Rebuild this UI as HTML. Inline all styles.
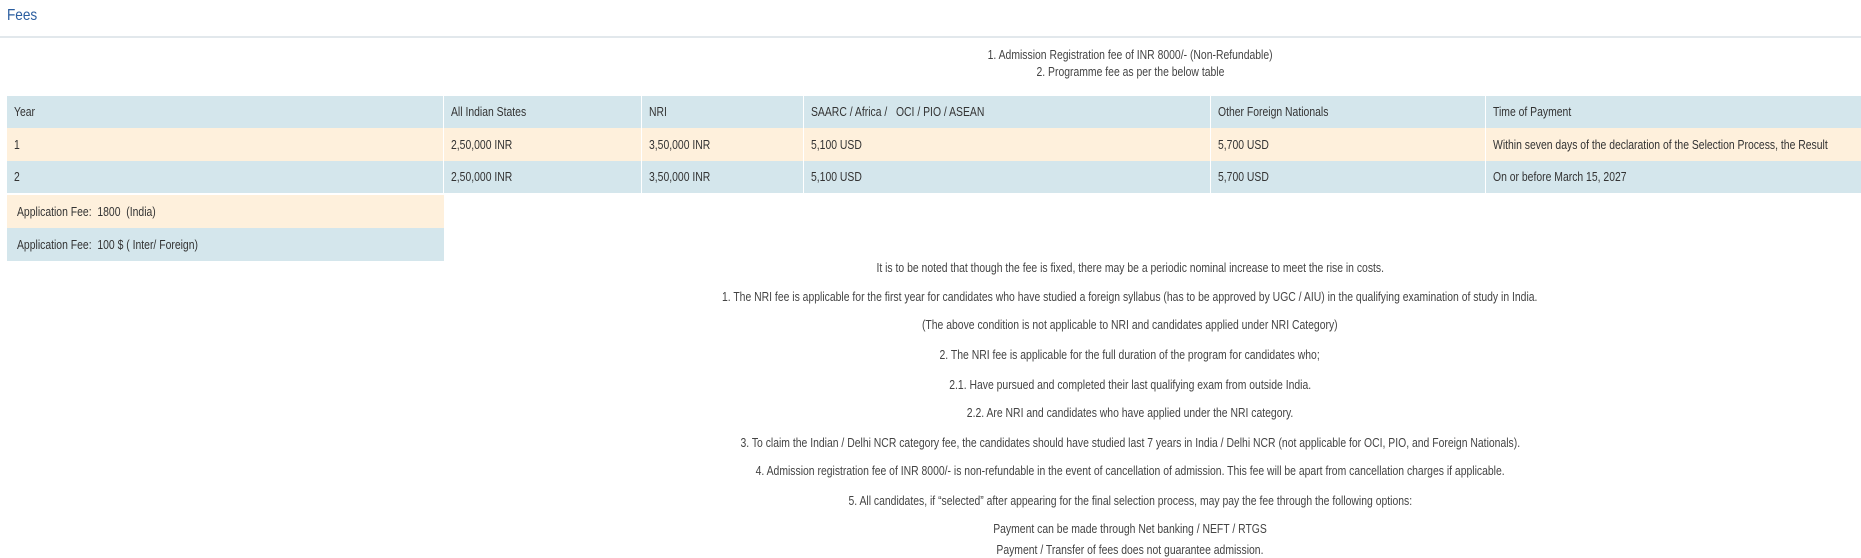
<!DOCTYPE html>
<html><head><meta charset="utf-8"><style>
body{margin:0;width:1861px;height:554px;background:#fff;font-family:"Liberation Sans",sans-serif;color:#333;position:relative;overflow:hidden}
.s{display:inline-block;transform:scaleX(0.8);white-space:nowrap}
.l{transform-origin:left center}
.a{position:absolute;font-size:13px;line-height:16px}
.c{position:absolute;left:0;width:2260px;text-align:center;font-size:13px;line-height:16px;color:#444}
.r{position:absolute;left:7px;width:1854px}
.cell{position:absolute;top:0;height:100%;border-right:1px solid #fff;box-sizing:border-box}
.cell span{position:absolute;left:7px;top:50%;margin-top:-8px;font-size:13px;line-height:16px;color:#333}
</style></head><body>
<div class="a" style="left:7px;top:7px;font-size:16px;line-height:18px;color:#2a5d9f"><span class="s l" style="transform:scaleX(0.85)">Fees</span></div>
<div style="position:absolute;left:0;top:36px;width:1861px;height:2px;background:#e2e8ec"></div>
<div class="c" style="top:47px"><span class="s">1. Admission Registration fee of INR 8000/- (Non-Refundable)</span></div>
<div class="c" style="top:64px"><span class="s">2. Programme fee as per the below table</span></div>

<div class="r" style="top:96px;height:32px;background:#d4e6ec">
<div class="cell" style="left:0;width:437px"><span class="s l">Year</span></div>
<div class="cell" style="left:437px;width:198px"><span class="s l">All Indian States</span></div>
<div class="cell" style="left:635px;width:162px"><span class="s l">NRI</span></div>
<div class="cell" style="left:797px;width:407px"><span class="s l">SAARC / Africa / &nbsp; OCI / PIO / ASEAN</span></div>
<div class="cell" style="left:1204px;width:275px"><span class="s l">Other Foreign Nationals</span></div>
<div class="cell" style="left:1479px;width:375px;border:0"><span class="s l">Time of Payment</span></div>
</div>
<div class="r" style="top:128px;height:33px;background:#fef0dc">
<div class="cell" style="left:0;width:437px"><span class="s l">1</span></div>
<div class="cell" style="left:437px;width:198px"><span class="s l">2,50,000 INR</span></div>
<div class="cell" style="left:635px;width:162px"><span class="s l">3,50,000 INR</span></div>
<div class="cell" style="left:797px;width:407px"><span class="s l">5,100 USD</span></div>
<div class="cell" style="left:1204px;width:275px"><span class="s l">5,700 USD</span></div>
<div class="cell" style="left:1479px;width:375px;border:0"><span class="s l">Within seven days of the declaration of the Selection Process, the Result</span></div>
</div>
<div class="r" style="top:161px;height:32px;background:#d4e6ec">
<div class="cell" style="left:0;width:437px"><span class="s l">2</span></div>
<div class="cell" style="left:437px;width:198px"><span class="s l">2,50,000 INR</span></div>
<div class="cell" style="left:635px;width:162px"><span class="s l">3,50,000 INR</span></div>
<div class="cell" style="left:797px;width:407px"><span class="s l">5,100 USD</span></div>
<div class="cell" style="left:1204px;width:275px"><span class="s l">5,700 USD</span></div>
<div class="cell" style="left:1479px;width:375px;border:0"><span class="s l">On or before March 15, 2027</span></div>
</div>
<div class="r" style="top:195px;height:33px;width:437px;background:#fef0dc"><div class="cell" style="left:3px;width:430px;border:0"><span class="s l">Application Fee:&nbsp; 1800 &nbsp;(India)</span></div></div>
<div class="r" style="top:228px;height:33px;width:437px;background:#d4e6ec"><div class="cell" style="left:3px;width:430px;border:0"><span class="s l">Application Fee:&nbsp; 100 $ ( Inter/ Foreign)</span></div></div>

<div class="c" style="top:260px"><span class="s">It is to be noted that though the fee is fixed, there may be a periodic nominal increase to meet the rise in costs.</span></div>
<div class="c" style="top:289px"><span class="s">1. The NRI fee is applicable for the first year for candidates who have studied a foreign syllabus (has to be approved by UGC / AIU) in the qualifying examination of study in India.</span></div>
<div class="c" style="top:317px"><span class="s">(The above condition is not applicable to NRI and candidates applied under NRI Category)</span></div>
<div class="c" style="top:347px"><span class="s">2. The NRI fee is applicable for the full duration of the program for candidates who;</span></div>
<div class="c" style="top:377px"><span class="s">2.1. Have pursued and completed their last qualifying exam from outside India.</span></div>
<div class="c" style="top:405px"><span class="s">2.2. Are NRI and candidates who have applied under the NRI category.</span></div>
<div class="c" style="top:435px"><span class="s">3. To claim the Indian / Delhi NCR category fee, the candidates should have studied last 7 years in India / Delhi NCR (not applicable for OCI, PIO, and Foreign Nationals).</span></div>
<div class="c" style="top:463px"><span class="s">4. Admission registration fee of INR 8000/- is non-refundable in the event of cancellation of admission. This fee will be apart from cancellation charges if applicable.</span></div>
<div class="c" style="top:493px"><span class="s">5. All candidates, if “selected” after appearing for the final selection process, may pay the fee through the following options:</span></div>
<div class="c" style="top:521px"><span class="s">Payment can be made through Net banking / NEFT / RTGS</span></div>
<div class="c" style="top:542px"><span class="s">Payment / Transfer of fees does not guarantee admission.</span></div>
</body></html>
